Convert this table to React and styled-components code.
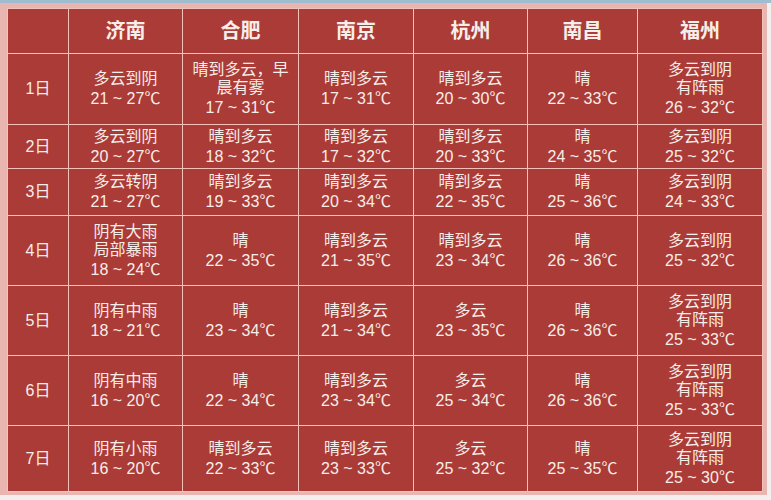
import React from "react";
import styled, { createGlobalStyle } from "styled-components";

const GlobalStyle = createGlobalStyle`
  html, body {
    margin: 0;
    padding: 0;
    background: #f4eeee;
  }
  body {
    font-family: "Liberation Sans", "Noto Sans CJK SC", sans-serif;
  }
`;

const cities = ["济南", "合肥", "南京", "杭州", "南昌", "福州"];

const rows = [
  {
    day: "1日",
    cells: [
      ["多云到阴", "21 ~ 27℃"],
      ["晴到多云，早", "晨有雾", "17 ~ 31℃"],
      ["晴到多云", "17 ~ 31℃"],
      ["晴到多云", "20 ~ 30℃"],
      ["晴", "22 ~ 33℃"],
      ["多云到阴", "有阵雨", "26 ~ 32℃"],
    ],
  },
  {
    day: "2日",
    cells: [
      ["多云到阴", "20 ~ 27℃"],
      ["晴到多云", "18 ~ 32℃"],
      ["晴到多云", "17 ~ 32℃"],
      ["晴到多云", "20 ~ 33℃"],
      ["晴", "24 ~ 35℃"],
      ["多云到阴", "25 ~ 32℃"],
    ],
  },
  {
    day: "3日",
    cells: [
      ["多云转阴", "21 ~ 27℃"],
      ["晴到多云", "19 ~ 33℃"],
      ["晴到多云", "20 ~ 34℃"],
      ["晴到多云", "22 ~ 35℃"],
      ["晴", "25 ~ 36℃"],
      ["多云到阴", "24 ~ 33℃"],
    ],
  },
  {
    day: "4日",
    cells: [
      ["阴有大雨", "局部暴雨", "18 ~ 24℃"],
      ["晴", "22 ~ 35℃"],
      ["晴到多云", "21 ~ 35℃"],
      ["晴到多云", "23 ~ 34℃"],
      ["晴", "26 ~ 36℃"],
      ["多云到阴", "25 ~ 32℃"],
    ],
  },
  {
    day: "5日",
    cells: [
      ["阴有中雨", "18 ~ 21℃"],
      ["晴", "23 ~ 34℃"],
      ["晴到多云", "21 ~ 34℃"],
      ["多云", "23 ~ 35℃"],
      ["晴", "26 ~ 36℃"],
      ["多云到阴", "有阵雨", "25 ~ 33℃"],
    ],
  },
  {
    day: "6日",
    cells: [
      ["阴有中雨", "16 ~ 20℃"],
      ["晴", "22 ~ 34℃"],
      ["晴到多云", "23 ~ 34℃"],
      ["多云", "25 ~ 34℃"],
      ["晴", "26 ~ 36℃"],
      ["多云到阴", "有阵雨", "25 ~ 33℃"],
    ],
  },
  {
    day: "7日",
    cells: [
      ["阴有小雨", "16 ~ 20℃"],
      ["晴到多云", "22 ~ 33℃"],
      ["晴到多云", "23 ~ 33℃"],
      ["多云", "25 ~ 32℃"],
      ["晴", "25 ~ 35℃"],
      ["多云到阴", "有阵雨", "25 ~ 30℃"],
    ],
  },
];

const Page = styled.div`
  width: 771px;
  height: 500px;
  overflow: hidden;
  border-top: 3px solid #9fbdd0;
  box-sizing: border-box;
`;

const Frame = styled.div`
  width: 767px;
  height: 492px;
  box-sizing: border-box;
  background: #e9b5b1;
  padding: 5px 5px 0 7px;
`;

const Table = styled.div`
  display: grid;
  grid-template-columns: 61px 114px 116px 115px 114px 110px 125px;
  grid-template-rows: 45px 71px 44px 47px 70px 70px 70px 66px;
  width: 755px;
  border-left: 1px solid #f2c2ba;
  border-top: 1px solid #f2c2ba;
  box-sizing: border-box;
  background: #ab3b37;
`;

const Cell = styled.div`
  box-sizing: border-box;
  border-right: 1px solid #f2c2ba;
  border-bottom: 1px solid #f2c2ba;
  background: #ab3b37;
  color: #f7eee9;
  display: flex;
  flex-direction: column;
  align-items: center;
  justify-content: center;
  text-align: center;
  font-size: ${(p) => (p.$head ? "20px" : "16px")};
  font-weight: ${(p) => (p.$head ? 700 : 400)};
  line-height: 18px;
  white-space: nowrap;
`;

const Line = styled.span`
  display: block;
`;

const Degree = styled.span`
  font-family: "Noto Sans CJK SC", sans-serif;
`;

// "℃" from the CJK face so it keeps its full width, as in the picture
const renderLine = (text) => {
  if (!text.endsWith("℃")) return text;
  return (
    <>
      {text.slice(0, -1)}
      <Degree>℃</Degree>
    </>
  );
};

export default function App() {
  return (
    <>
      <GlobalStyle />
      <Page>
        <Frame>
          <Table>
            <Cell $head />
            {cities.map((c) => (
              <Cell $head key={c}>{c}</Cell>
            ))}
            {rows.map((r) => (
              <React.Fragment key={r.day}>
                <Cell>{r.day}</Cell>
                {r.cells.map((lines, i) => (
                  <Cell key={i}>
                    {lines.map((l, j) => (
                      <Line key={j}>{renderLine(l)}</Line>
                    ))}
                  </Cell>
                ))}
              </React.Fragment>
            ))}
          </Table>
        </Frame>
      </Page>
    </>
  );
}
